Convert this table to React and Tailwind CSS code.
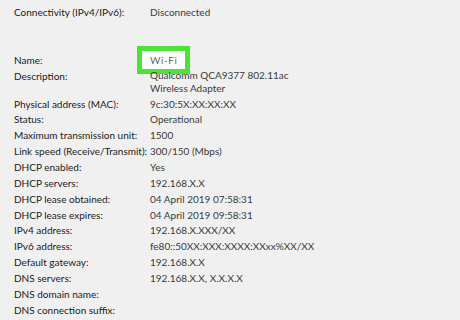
import React from 'react'

const rows = [
  ['Physical address (MAC):', '9c:30:5X:XX:XX:XX'],
  ['Status:', 'Operational'],
  ['Maximum transmission unit:', '1500'],
  ['Link speed (Receive/Transmit):', '300/150 (Mbps)'],
  ['DHCP enabled:', 'Yes'],
  ['DHCP servers:', '192.168.X.X'],
  ['DHCP lease obtained:', '04 April 2019 07:58:31'],
  ['DHCP lease expires:', '04 April 2019 09:58:31'],
  ['IPv4 address:', '192.168.X.XXX/XX'],
  ['IPv6 address:', 'fe80::50XX:XXX:XXXX:XXxx%XX/XX'],
  ['Default gateway:', '192.168.X.X'],
  ['DNS servers:', '192.168.X.X, X.X.X.X'],
  ['DNS domain name:', ''],
  ['DNS connection suffix:', ''],
]

const Row = ({ label, children }) => (
  <div className="flex h-[15.85px] items-center whitespace-nowrap">
    <div className="w-[136px] shrink-0 text-[#1a1a1a]">{label}</div>
    <div className="text-[#3a3a3a]">{children}</div>
  </div>
)

export default function App() {
  return (
    <div
      className="h-[320px] w-[460px] overflow-hidden bg-[#f0f0f0] pl-[14px] text-[10px] leading-[13px]"
      style={{ fontFamily: 'Lato, "Noto Sans", sans-serif' }}
    >
      <div className="-mt-[11px]">
        <Row label="">fe80::XXXX:XXXX%XX</Row>
        <Row label="Connectivity (IPv4/IPv6):">Disconnected</Row>
        <div className="h-[31.7px]" />
        <div className="flex h-[15.85px] items-center whitespace-nowrap">
          <div className="w-[123px] shrink-0 text-[#1a1a1a]">Name:</div>
          <div className="flex h-[28px] w-[53px] shrink-0 items-center border-[5px] border-[#4de236] bg-white pl-[8px] tracking-[0.6px] text-[#666]">
            Wi-Fi
          </div>
        </div>
        <div className="flex whitespace-nowrap pt-[1px] pb-[1px]">
          <div className="w-[136px] shrink-0 pt-[1px] text-[#1a1a1a]">Description:</div>
          <div className="text-[#3a3a3a]">
            Qualcomm QCA9377 802.11ac
            <br />
            Wireless Adapter
          </div>
        </div>
        {rows.map(([l, v]) => (
          <Row key={l} label={l}>{v}</Row>
        ))}
      </div>
    </div>
  )
}
